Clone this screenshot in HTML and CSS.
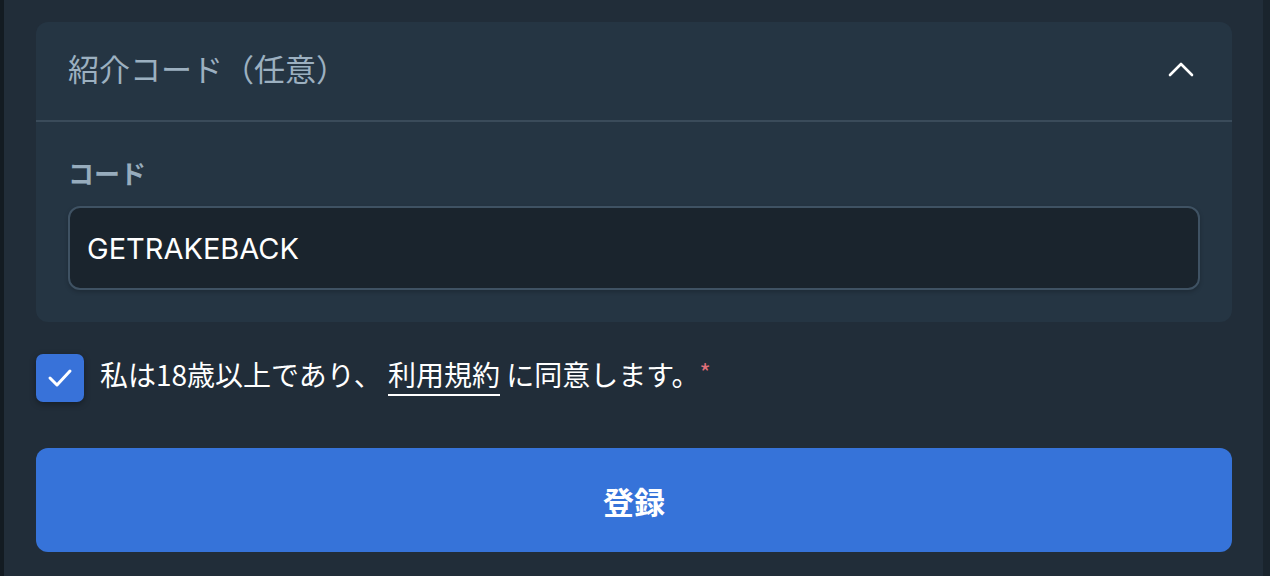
FILE: index.html
```html
<!DOCTYPE html>
<html lang="ja">
<head>
    <meta charset="UTF-8">
    <meta name="viewport" content="width=device-width, initial-scale=1.0">
    <title>登録</title>
    <link rel="stylesheet" href="styles.css">
</head>
<body>
<div class="modal">
    <div class="referral">
        <div class="referral-head">
            <span class="referral-title">紹介コード（任意）</span>
            <svg class="chevron" width="26" height="16" viewBox="0 0 26 16">
                <path d="M2 14 L13 3 L24 14" fill="none" stroke="#ffffff" stroke-width="2.6" stroke-linecap="round" stroke-linejoin="round"/>
            </svg>
        </div>
        <div class="referral-body">
            <label class="field-label" for="code">コード</label>
            <input class="field-input" id="code" type="text" value="GETRAKEBACK">
        </div>
    </div>

    <!-- Согласие -->
    <div class="agree">
        <span class="checkbox">
            <svg width="26" height="22" viewBox="0 0 26 22">
                <path d="M3 11 L10 18 L23 4" fill="none" stroke="#ffffff" stroke-width="3" stroke-linecap="round" stroke-linejoin="round"/>
            </svg>
        </span>
        <span class="agree-text">私は18歳以上であり、 <a class="terms" href="#">利用規約</a> に同意します。</span>
        <span class="required">*</span>
    </div>

    <button class="submit">登録</button>
</div>
</body>
</html>
```

FILE: styles.css
```css
body {
    margin: 0;
    background-color: #1a242d;
    font-family: "Noto Sans CJK JP", "Noto Sans", sans-serif;
    height: 576px;
    overflow: hidden;
}

.modal {
    width: 1263px;
    height: 576px;
    box-sizing: border-box;
    border-left: 4px solid #131b22;
    background-color: #212d39;
    padding: 22px 28px 0 32px;
}

.referral {
    background-color: #253543;
    border-radius: 12px;
    width: 1196px;
    height: 300px;
}

.referral-head {
    display: flex;
    justify-content: space-between;
    align-items: center;
    height: 98px;
    padding: 0 38px 0 32px;
    border-bottom: 2px solid #3a4b5a;
}

.referral-title {
    font-size: 31px;
    color: #9cb0c0;
    margin-top: -8px;
}

.chevron {
    margin-top: -4px;
}

.referral-body {
    padding: 34px 32px 0 32px;
}

.field-label {
    display: block;
    font-size: 26px;
    font-weight: bold;
    color: #97acbd;
    line-height: 34px;
    margin-bottom: 16px;
}

.field-input {
    width: 1132px;
    height: 84px;
    box-sizing: border-box;
    background-color: #1a242d;
    border: 2px solid #3f5263;
    border-radius: 12px;
    padding: 0 17px;
    font-family: "Inter", "Lato", sans-serif;
    font-size: 29px;
    font-weight: 400;
    color: #ffffff;
    outline: none;
    box-shadow: 0 2px 4px rgba(0, 0, 0, 0.2);
}

.agree {
    display: flex;
    align-items: center;
    margin-top: 32px;
    height: 48px;
}

.checkbox {
    width: 48px;
    height: 48px;
    border-radius: 7px;
    background-color: #3872d9;
    display: flex;
    justify-content: center;
    align-items: center;
    box-shadow: 0 2px 6px rgba(0, 0, 0, 0.35);
    margin-right: 16px;
}

.agree-text {
    font-size: 28px;
    color: #ffffff;
    margin-top: -8px;
    white-space: pre;
}

.terms {
    color: #ffffff;
    text-decoration: none;
    border-bottom: 2px solid #ffffff;
}

.required {
    color: #e0707a;
    font-size: 24px;
    margin-left: 0;
    margin-top: -14px;
}

.submit {
    display: block;
    width: 1196px;
    height: 104px;
    margin-top: 46px;
    border: none;
    border-radius: 12px;
    background-color: #3673d9;
    color: #ffffff;
    font-family: "Noto Sans CJK JP", sans-serif;
    font-size: 31px;
    font-weight: bold;
    cursor: pointer;
}
```
